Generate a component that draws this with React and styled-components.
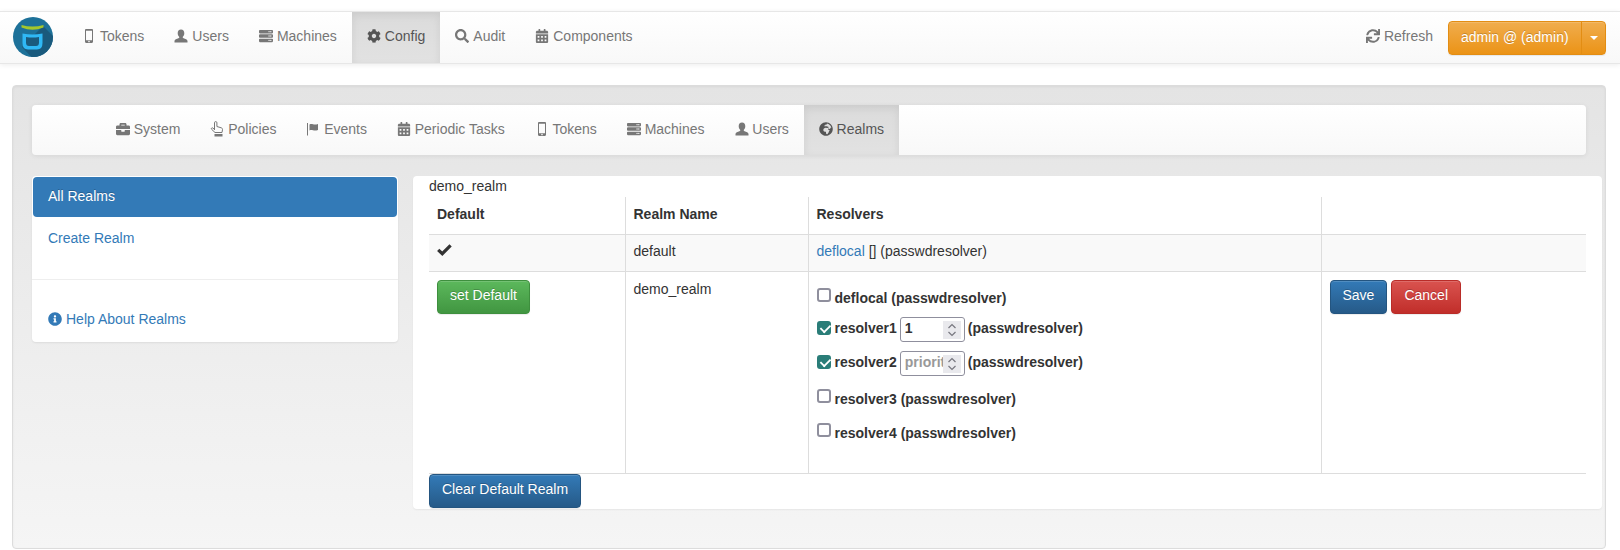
import styled, { createGlobalStyle } from "styled-components"
import {
    FaBriefcase, FaCalendarAlt, FaCog, FaGlobeAfrica, FaInfoCircle,
    FaSearch, FaServer, FaSync,
} from "react-icons/fa"

const GlobalStyle = createGlobalStyle`
    html, body {
        margin: 0;
        height: 550px;
        overflow: hidden;
        background: #fff;
        color: #333;
        font: 14px/20px "Liberation Sans", Arial, sans-serif;
    }
    * { box-sizing: border-box; }
`

const Navbar = styled.div`
    margin-top: 11px;
    height: 53px;
    display: flex;
    align-items: stretch;
    border: solid #e7e7e7;
    border-width: 1px 0;
    background: linear-gradient(to bottom, #fff 0, #f8f8f8 100%);
    box-shadow: inset 0 1px 0 rgba(255,255,255,.15), 0 1px 5px rgba(0,0,0,.075);
`

const Brand = styled.div`
    width: 67px;
    padding: 5px 0 0 13px;
`

const NavItem = styled.div`
    display: flex;
    align-items: center;
    gap: ${p => p.$gap || 4}px;
    padding: 0 15px 3px;
    color: ${p => (p.$active ? "#555" : "#777")};
    white-space: nowrap;
    ${p => p.$active && `
        background: linear-gradient(to bottom, #dbdbdb 0, #e2e2e2 100%);
        box-shadow: inset 0 3px 9px rgba(0,0,0,.075);
    `}
`

const IconBox = styled.span`
    width: 14px;
    height: 14px;
    display: inline-flex;
    align-items: center;
    justify-content: center;
    color: inherit;
    flex: none;
`

const NavRight = styled.div`
    margin-left: auto;
    display: flex;
    align-items: stretch;
    padding-right: 14px;
`

const SplitButton = styled.div`
    align-self: center;
    display: flex;
    width: 158px;
    height: 34px;
    color: #fff;
    border: 1px solid #e38d13;
    border-radius: 4px;
    background: linear-gradient(to bottom, #f0ad4e 0, #eb9316 100%);
    box-shadow: inset 0 1px 0 rgba(255,255,255,.15), 0 1px 1px rgba(0,0,0,.075);
    text-shadow: 0 -1px 0 rgba(0,0,0,.2);
`

const SplitLabel = styled.div`
    padding: 5px 12px;
    width: 133px;
    border-right: 1px solid #e38d13;
    white-space: nowrap;
`

const SplitCaret = styled.div`
    flex: 1;
    display: flex;
    align-items: center;
    justify-content: center;

    &::after {
        content: "";
        border-top: 4px solid #fff;
        border-left: 4px solid transparent;
        border-right: 4px solid transparent;
    }
`

const Well = styled.div`
    margin: 21px 14px 0 12px;
    padding: 19px 19px 39px;
    border: 1px solid #dcdcdc;
    border-radius: 4px;
    background: linear-gradient(to bottom, #e4e4e4 0, #f5f5f5 100%);
    box-shadow: inset 0 1px 3px rgba(0,0,0,.05), 0 1px 0 rgba(255,255,255,.1);
`

const SubNav = styled.div`
    height: 50px;
    display: flex;
    padding-left: 69px;
    border-radius: 4px;
    background: linear-gradient(to bottom, #fff 0, #f8f8f8 100%);
    box-shadow: inset 0 1px 0 rgba(255,255,255,.15), 0 1px 5px rgba(0,0,0,.075);
`

const Columns = styled.div`
    display: flex;
    align-items: flex-start;
    margin: 21px -16px 0 0;
`

const Sidebar = styled.div`
    width: 366px;
    height: 166px;
    flex: none;
    margin-right: 15px;
    padding-top: 1px;
    border-radius: 4px;
    background: #fff;
    box-shadow: 0 1px 2px rgba(0,0,0,.08);
`

const SideActive = styled.div`
    height: 40px;
    margin: 0 1px;
    padding: 9px 15px 11px;
    color: #fff;
    background: #337ab7;
    border-radius: 4px;
    text-shadow: 0 -1px 0 #286090;
`

const SideLink = styled.div`
    padding: ${p => p.$padding};
    color: #337ab7;
    display: flex;
    align-items: center;
    gap: 4px;
`

const SideDivider = styled.div`
    height: 1px;
    margin-top: 20px;
    background: #eee;
`

const Main = styled.div`
    flex: 1;
    padding: 0 16px 1px 16px;
    background: #fff;
    border-radius: 4px;
    box-shadow: 0 1px 2px rgba(0,0,0,.06);
`

const Table = styled.table`
    width: 100%;
    margin-top: 1px;
    border-collapse: collapse;
    table-layout: fixed;
`

const Th = styled.th`
    padding: 7px 8px 10px;
    text-align: left;
    border-bottom: 1px solid #ddd;
    border-right: ${p => (p.$last ? "0" : "1px solid #ddd")};
`

const Td = styled.td`
    padding: ${p => p.$padding || "6px 8px 10px"};
    vertical-align: top;
    background: ${p => (p.$striped ? "#f9f9f9" : "#fff")};
    border-bottom: 1px solid #ddd;
    border-right: ${p => (p.$last ? "0" : "1px solid #ddd")};
    height: ${p => p.$height || "auto"};
`

const Link = styled.span`
    color: #337ab7;
`

const Button = styled.button`
    height: 34px;
    padding: 4px 12px 8px;
    font: inherit;
    color: #fff;
    border: 1px solid ${p => p.$border};
    border-radius: 4px;
    background: linear-gradient(to bottom, ${p => p.$from} 0, ${p => p.$to} 100%);
    box-shadow: inset 0 1px 0 rgba(255,255,255,.15), 0 1px 1px rgba(0,0,0,.075);
    text-shadow: 0 -1px 0 rgba(0,0,0,.2);
`

const ButtonRow = styled.div`
    display: flex;
    gap: 4px;
`

const Resolvers = styled.div`
    padding-top: 8px;
    font-weight: bold;
`

const ResolverRow = styled.label`
    display: flex;
    align-items: center;
    gap: 3px;
    margin-top: ${p => p.$top}px;
    min-height: 20px;
`

// input rows sit their text a little above the middle of the field
const ResolverText = styled.span`
    margin-bottom: ${p => (p.$lifted ? 4 : 0)}px;
    white-space: nowrap;
`

const Check = styled.input.attrs({ type: "checkbox" })`
    appearance: none;
    position: relative;
    width: 14px;
    height: 14px;
    margin: 0 1px ${p => (p.defaultChecked ? 3 : 6)}px 0;
    border: 2px solid #8f8f9d;
    border-radius: 3px;
    background: #fff;
    flex: none;

    &:checked {
        border-color: #2a7d78;
        background: #2a7d78;
    }
    &:checked::after {
        content: "";
        position: absolute;
        left: 3px;
        top: -1px;
        width: 5px;
        height: 9px;
        border: solid #fff;
        border-width: 0 2px 2px 0;
        transform: rotate(45deg) scale(.9);
    }
`

const PriorityField = styled.span`
    position: relative;
    width: 65px;
    height: 25px;
    flex: none;
`

const PriorityInput = styled.input.attrs({ type: "number" })`
    width: 100%;
    height: 100%;
    padding: 0 4px 3px;
    font: inherit;
    color: #333;
    border: 1px solid #8f8f9d;
    border-radius: 3px;
    appearance: textfield;

    &::placeholder { color: #999; }
    &::-webkit-inner-spin-button { display: none; }
`

const Spinner = styled.span`
    position: absolute;
    top: 4px;
    right: 4px;
    width: 18px;
    height: 18px;
    display: flex;
    align-items: center;
    justify-content: center;
    background: #e9e9ed;
`

const ClearButton = styled(Button)`
    display: block;
`

const primary = { $from: "#337ab7", $to: "#265a88", $border: "#245580" }
const success = { $from: "#5cb85c", $to: "#419641", $border: "#3e8f3e" }
const danger = { $from: "#d9534f", $to: "#c12e2a", $border: "#b92c28" }

const Logo = () => (
    <svg width="40" height="40" viewBox="0 0 40 40">
        <clipPath id="logo-round"><circle cx="20" cy="20" r="20" /></clipPath>
        <g clipPath="url(#logo-round)">
            <rect width="40" height="40" fill="#1d7199" />
            <path d="M9 30 L24 46 L46 40 L46 25 L30 9 Z" fill="#1a5a7d" />
            <path d="M8.500 8 Q19.500 11 30.500 8 L30.500 10.500 Q19.500 15 8.500 10.500 Z" fill="#a4c72c" />
            <path d="M9.500 16.500 Q19.500 18.500 29.500 16.500 L29.500 26 Q29.500 32.500 24 32.500 L15 32.500 Q9.500 32.500 9.500 26 Z" fill="#2fb8f5" />
            <path d="M13 20 Q19.500 21 26 20 L26 25.500 Q26 29 23 29 L16 29 Q13 29 13 25.500 Z" fill="#1a5a7d" />
        </g>
    </svg>
)

const PhoneIcon = () => (
    <svg width="14" height="14" viewBox="0 0 14 14" fill="currentColor">
        <path fillRule="evenodd" d="M4.2 0h5.6C10.6 0 11 .5 11 1.200v11.600c0 .7-.4 1.200-1.200 1.200H4.200C3.400 14 3 13.500 3 12.800V1.200C3 .5 3.400 0 4.200 0zM4 1.800v9.400h6V1.800zM7 11.800a.8.8 0 1 0 0 1.600a.8.8 0 0 0 0-1.600z" />
    </svg>
)

const FlagIcon = () => (
    <svg width="14" height="14" viewBox="0 0 14 14" fill="currentColor">
        <path d="M1 1h1v12.500H1zM3.500 2.500C6 1 7.500 3.500 12 2v6C7.500 9.500 6 7 3.500 8.500z" />
    </svg>
)

const UserIcon = () => (
    <svg width="14" height="14" viewBox="0 0 14 14" fill="currentColor">
        <path d="M7 .5c2.200 0 3.300 1.700 3.300 3.800 0 1.600-.8 3-1.600 3.700 0 .6.200 1 .9 1.300 1.600.6 3.900 1.400 3.900 2.700v1.500H.5V12c0-1.300 2.300-2.100 3.900-2.700.7-.3.900-.7.900-1.300-.8-.7-1.600-2.100-1.600-3.700C3.700 2.200 4.800.5 7 .5z" />
    </svg>
)

const HandIcon = () => (
    <svg width="14" height="16" viewBox="0 0 14 16" fill="none" stroke="currentColor">
        <path d="M4.500 9V1.800a1.200 1.200 0 0 1 2.400 0V5.500l4.300 1.300c1 .3 1.400 .9 1.300 1.800L12 11.500H5L1.600 8.300c-.8-.9.500-2 1.400-1.200L4.500 8.500" />
        <path d="M4.500 13h8v2.500h-8z" fill="currentColor" stroke="none" />
    </svg>
)

const TickIcon = () => (
    <svg width="15" height="12" viewBox="0 0 15 12" fill="none" stroke="currentColor" strokeWidth="3.200">
        <path d="M1.200 5.800L5.300 9.700L13.600 1.400" />
    </svg>
)

const SpinnerIcon = () => (
    <svg width="10" height="14" viewBox="0 0 10 14" fill="none" stroke="#77777f" strokeWidth="1.200">
        <path d="M1.500 5L5 1.500L8.500 5M1.500 9L5 12.500L8.500 9" />
    </svg>
)

const mainItems = [
    [<PhoneIcon />, "Tokens"],
    [<UserIcon />, "Users"],
    [<FaServer size={14} />, "Machines"],
    [<FaCog size={14} />, "Config", true],
    [<FaSearch size={14} />, "Audit"],
    [<FaCalendarAlt size={14} />, "Components"],
]

const subItems = [
    [<FaBriefcase size={14} />, "System"],
    [<HandIcon />, "Policies"],
    [<FlagIcon />, "Events"],
    [<FaCalendarAlt size={14} />, "Periodic Tasks"],
    [<PhoneIcon />, "Tokens"],
    [<FaServer size={14} />, "Machines"],
    [<UserIcon />, "Users"],
    [<FaGlobeAfrica size={14} />, "Realms", true],
]

const Priority = (props) => (
    <PriorityField>
        <PriorityInput {...props} />
        <Spinner><SpinnerIcon /></Spinner>
    </PriorityField>
)

const App = () => {
    return (
        <>
            <GlobalStyle />
            <Navbar>
                <Brand><Logo /></Brand>
                {mainItems.map(([icon, label, active]) => (
                    <NavItem key={label} $active={active}>
                        <IconBox>{icon}</IconBox>{label}
                    </NavItem>
                ))}
                <NavRight>
                    <NavItem>
                        <IconBox><FaSync size={14} /></IconBox>Refresh
                    </NavItem>
                    <SplitButton>
                        <SplitLabel>admin @ (admin)</SplitLabel>
                        <SplitCaret />
                    </SplitButton>
                </NavRight>
            </Navbar>
            <Well>
                <SubNav>
                    {subItems.map(([icon, label, active]) => (
                        <NavItem key={label} $active={active} $gap={3.75}>
                            <IconBox>{icon}</IconBox>{label}
                        </NavItem>
                    ))}
                </SubNav>
                <Columns>
                    <Sidebar>
                        <SideActive>All Realms</SideActive>
                        <SideLink $padding="11px 16px">Create Realm</SideLink>
                        <SideDivider />
                        <SideLink $padding="29px 16px 0">
                            <FaInfoCircle size={14} /> Help About Realms
                        </SideLink>
                    </Sidebar>
                    <Main>
                        <div>demo_realm</div>
                        <Table>
                            <colgroup>
                                <col width="196" />
                                <col width="183" />
                                <col width="513" />
                                <col />
                            </colgroup>
                            <thead>
                                <tr>
                                    <Th>Default</Th>
                                    <Th>Realm Name</Th>
                                    <Th>Resolvers</Th>
                                    <Th $last />
                                </tr>
                            </thead>
                            <tbody>
                                <tr>
                                    <Td $striped><TickIcon /></Td>
                                    <Td $striped>default</Td>
                                    <Td $striped><Link>deflocal</Link> [] (passwdresolver)</Td>
                                    <Td $striped $last />
                                </tr>
                                <tr>
                                    <Td $height="202px" $padding="8px"><Button {...success}>set Default</Button></Td>
                                    <Td $padding="7px 8px">demo_realm</Td>
                                    <Td $padding="8px">
                                        <Resolvers>
                                            <ResolverRow $top={0}><Check /><ResolverText>deflocal (passwdresolver)</ResolverText></ResolverRow>
                                            <ResolverRow $top={9}>
                                                <Check defaultChecked /><ResolverText $lifted>resolver1</ResolverText>
                                                <Priority defaultValue="1" />
                                                <ResolverText $lifted>(passwdresolver)</ResolverText>
                                            </ResolverRow>
                                            <ResolverRow $top={9}>
                                                <Check defaultChecked /><ResolverText $lifted>resolver2</ResolverText>
                                                <Priority placeholder="priority" />
                                                <ResolverText $lifted>(passwdresolver)</ResolverText>
                                            </ResolverRow>
                                            <ResolverRow $top={13}><Check /><ResolverText>resolver3 (passwdresolver)</ResolverText></ResolverRow>
                                            <ResolverRow $top={14}><Check /><ResolverText>resolver4 (passwdresolver)</ResolverText></ResolverRow>
                                        </Resolvers>
                                    </Td>
                                    <Td $last $padding="8px">
                                        <ButtonRow>
                                            <Button {...primary}>Save</Button>
                                            <Button {...danger}>Cancel</Button>
                                        </ButtonRow>
                                    </Td>
                                </tr>
                            </tbody>
                        </Table>
                        <ClearButton {...primary}>Clear Default Realm</ClearButton>
                    </Main>
                </Columns>
            </Well>
        </>
    )
}

export default App
